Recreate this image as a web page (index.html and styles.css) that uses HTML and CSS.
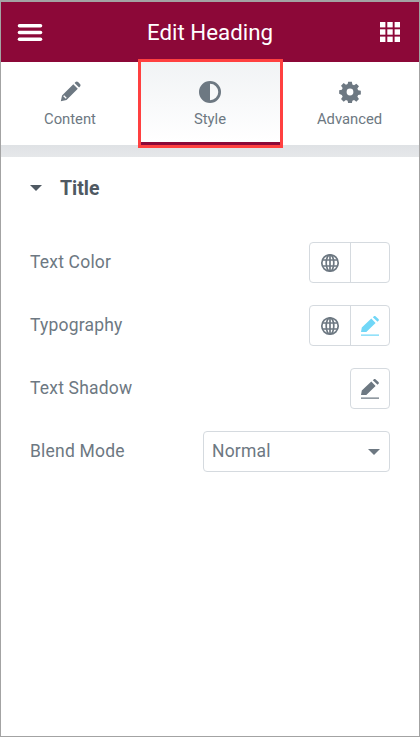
FILE: index.html
```html
<!DOCTYPE html>
<html lang="en">
<head>
  <meta charset="UTF-8">
  <meta name="viewport" content="width=device-width, initial-scale=1">
  <title>Edit Heading</title>
  <link rel="stylesheet" href="styles.css">
</head>
<body>
  <div class="panel">
    <!-- header -->
    <div class="header">
      <svg class="menu-icon" viewBox="0 0 26 18" aria-hidden="true">
        <rect x="0" y="0" width="26" height="3.6" rx="1.8"/>
        <rect x="0" y="7.2" width="26" height="3.6" rx="1.8"/>
        <rect x="0" y="14.4" width="26" height="3.6" rx="1.8"/>
      </svg>
      <h1 class="title">Edit Heading</h1>
      <svg class="grid-icon" viewBox="0 0 20 20" aria-hidden="true">
        <rect x="0" y="0" width="5.4" height="5.4"/><rect x="7.3" y="0" width="5.4" height="5.4"/><rect x="14.6" y="0" width="5.4" height="5.4"/>
        <rect x="0" y="7.3" width="5.4" height="5.4"/><rect x="7.3" y="7.3" width="5.4" height="5.4"/><rect x="14.6" y="7.3" width="5.4" height="5.4"/>
        <rect x="0" y="14.6" width="5.4" height="5.4"/><rect x="7.3" y="14.6" width="5.4" height="5.4"/><rect x="14.6" y="14.6" width="5.4" height="5.4"/>
      </svg>
    </div>

    <!-- tabs -->
    <div class="tabs">
      <div class="tab">
        <svg class="tab-icon" viewBox="0 0 24 24" aria-hidden="true"><path d="M2 22l1.300-6.200L15.600 3.500l4.900 4.900L8.200 20.700zM17 2.100l1-1c.8-.8 2-.8 2.800 0l2.100 2.100c.8.800.8 2 0 2.800l-1 1zM4.600 16.600l2.800 2.800 1-1-2.800-2.800z" fill-rule="evenodd"/></svg>
        <span class="tab-label">Content</span>
      </div>
      <div class="tab tab-active">
        <svg class="tab-icon" viewBox="0 0 24 24" aria-hidden="true"><path fill-rule="evenodd" d="M12 0a12 12 0 1 1 0 24a12 12 0 0 1 0-24zM12 3v18a9 9 0 0 0 0-18z"/></svg>
        <span class="tab-label">Style</span>
      </div>
      <div class="tab">
        <svg class="tab-icon" viewBox="-1 -1 26 26" aria-hidden="true"><path fill-rule="evenodd" d="M9.800 0h4.400l.6 3.200 2 .9 2.700-1.900 3.100 3.100-1.900 2.700.9 2 3.200.6v4.400l-3.200.6-.9 2 1.900 2.700-3.100 3.100-2.700-1.900-2 .9-.6 3.200H9.800l-.6-3.200-2-.9-2.700 1.900-3.100-3.100 1.900-2.700-.9-2L-.8 14.200V9.800l3.200-.6.9-2L1.400 4.500l3.100-3.100 2.700 1.900 2-.9zM12 8a4 4 0 1 0 0 8a4 4 0 0 0 0-8z"/></svg>
        <span class="tab-label">Advanced</span>
      </div>
    </div>
    <div class="tabs-shadow"></div>

    <!-- section -->
    <div class="section">
      <div class="section-head">
        <span class="caret"></span>
        <span class="section-title">Title</span>
      </div>

      <div class="row">
        <span class="row-label">Text Color</span>
        <div class="btn-group">
          <div class="btn">
            <svg class="globe" viewBox="0 0 20 20" aria-hidden="true"><circle cx="10" cy="10" r="8.200"/><ellipse cx="10" cy="10" rx="3.800" ry="8.200"/><path d="M10 2v16M2.400 7h15.200M2.400 13h15.200"/></svg>
          </div>
          <div class="btn"></div>
        </div>
      </div>

      <div class="row">
        <span class="row-label">Typography</span>
        <div class="btn-group">
          <div class="btn">
            <svg class="globe" viewBox="0 0 20 20" aria-hidden="true"><circle cx="10" cy="10" r="8.200"/><ellipse cx="10" cy="10" rx="3.800" ry="8.200"/><path d="M10 2v16M2.400 7h15.200M2.400 13h15.200"/></svg>
          </div>
          <div class="btn">
            <svg class="edit edit-on" viewBox="0 0 18 20" aria-hidden="true"><path d="M0 16l.8-4.500L10.300 2.600l4.300 4.300L5.300 16zM11.800 1.300l.9-.9c.6-.5 1.400-.5 2 0l2.800 2.600c.5.500.5 1.300 0 1.800l-1 1zM0 18.400h18v1.400H0z"/></svg>
          </div>
        </div>
      </div>

      <div class="row">
        <span class="row-label">Text Shadow</span>
        <div class="btn-group">
          <div class="btn">
            <svg class="edit" viewBox="0 0 18 20" aria-hidden="true"><path d="M0 16l.8-4.500L10.300 2.600l4.300 4.300L5.300 16zM11.800 1.300l.9-.9c.6-.5 1.400-.5 2 0l2.800 2.600c.5.500.5 1.300 0 1.800l-1 1zM0 18.400h18v1.400H0z"/></svg>
          </div>
        </div>
      </div>

      <div class="row">
        <span class="row-label">Blend Mode</span>
        <div class="select">
          <span class="select-value">Normal</span>
          <span class="select-caret"></span>
        </div>
      </div>
    </div>
  </div>
</body>
</html>
```

FILE: styles.css
```css
* { box-sizing: border-box; }
html, body { height: 100%; }
body { margin: 0; font-family: Roboto, 'Liberation Sans', sans-serif; background: #fff; color: #6d7882; }

.panel { height: 737px; border: 1px solid #a3a3a3; border-top-width: 2px; display: flex; flex-direction: column; background: #fff; }

.header { height: 60px; background: #8c0838; display: flex; align-items: center; justify-content: space-between; padding: 0 19px 0 16px; flex-shrink: 0; }
.menu-icon { width: 26px; height: 17px; }
.menu-icon, .grid-icon { fill: #fff; }
.title { margin: 0 3px 0 0; font-size: 22.3px; font-weight: 400; color: #fff; }
.grid-icon { width: 20px; height: 20px; }

.tabs { display: grid; grid-template-columns: 140px 139px 1fr; height: 83px; flex-shrink: 0; }
.tab { display: flex; flex-direction: column; align-items: center; padding-top: 19px; padding-right: 2px; }
.tab:last-child { padding-right: 0; }
.tab-active { position: relative; z-index: 1; padding-right: 1px; background: linear-gradient(to bottom, #f1f3f5, #fff); border-bottom: 3px solid #8c0838; outline: 3px solid #ff4040; }
.tab-icon { width: 22px; height: 22px; fill: #6d7882; }
.tab-label { font-size: 14.8px; margin-top: 7px; }

.tabs-shadow { height: 12px; background: linear-gradient(to bottom, #dfe2e5, #e6e8ea); flex-shrink: 0; }

.section { padding: 0 29px; }
.section-head { display: flex; align-items: center; gap: 18px; height: 62px; }
.caret { width: 0; height: 0; border-left: 6px solid transparent; border-right: 6px solid transparent; border-top: 6px solid #4f5962; }
.section-title { font-size: 19.5px; font-weight: 700; color: #4f5962; }

.row { display: flex; align-items: center; justify-content: space-between; height: 41px; margin-top: 22px; }
.section-head + .row { margin-top: 23px; }
.row-label, .select-value { font-size: 17.5px; letter-spacing: 0.2px; margin-bottom: 2px; }

.btn-group { display: flex; height: 41px; border: 1px solid #d5dadf; border-radius: 4px; }
.btn { width: 38px; display: flex; align-items: center; justify-content: center; }
.btn:first-child:not(:only-child) { width: 40px; }
.btn + .btn { width: 39px; border-left: 1px solid #d5dadf; }

.globe { width: 20px; height: 20px; fill: none; stroke: #6d7882; stroke-width: 1.7; }
.edit { width: 18px; height: 20px; fill: #6d7882; }
.edit-on { fill: #71d7f7; }

.select { width: 187px; height: 41px; border: 1px solid #d5dadf; border-radius: 4px; display: flex; align-items: center; justify-content: space-between; padding: 0 9px 0 8px; }
.select-caret { width: 0; height: 0; border-left: 6px solid transparent; border-right: 6px solid transparent; border-top: 6px solid #6d7882; }
```
